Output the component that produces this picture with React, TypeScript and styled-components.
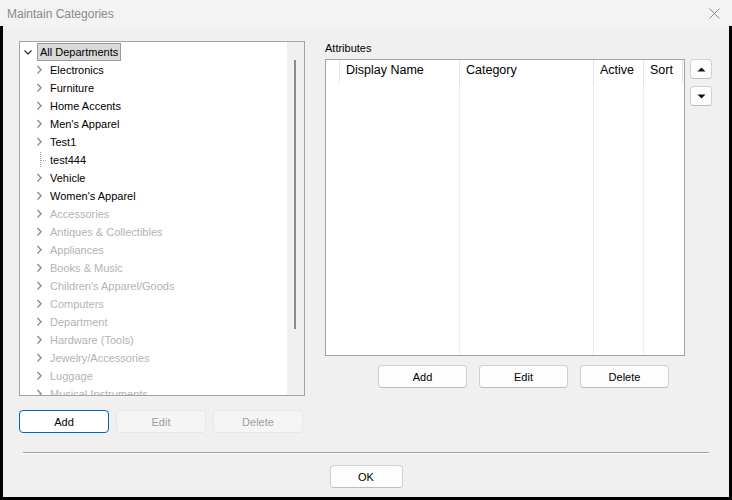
import * as React from 'react';
import styled, { createGlobalStyle } from 'styled-components';

const GlobalStyle = createGlobalStyle`
  html, body {
    margin: 0;
    padding: 0;
    background: #000;
  }
  body {
    font-family: 'Liberation Sans', Arial, sans-serif;
  }
`;

const Window = styled.div`
  width: 732px;
  height: 500px;
  display: flex;
  flex-direction: column;
  overflow: hidden;
`;

const TitleBar = styled.div`
  height: 26px;
  flex: none;
  display: flex;
  align-items: center;
  justify-content: space-between;
  padding: 0 12px 0 7px;
  box-sizing: border-box;
  background: #f3f3f3;
`;

const TitleText = styled.span`
  font-size: 12px;
  color: #8a8a8a;
  margin-top: 2px;
`;

const Body = styled.div`
  flex: 1;
  display: flex;
  flex-direction: column;
  background: #f0f0f0;
  border: 3px solid #000;
  border-top: none;
`;

const Main = styled.div`
  display: flex;
  gap: 20px;
  padding: 15px 0 0 16px;
`;

const Column = styled.div`
  display: flex;
  flex-direction: column;
`;

/* ---- tree ---- */

const TreeBox = styled.div`
  width: 286px;
  height: 355px;
  box-sizing: border-box;
  border: 1px solid #a3a3a3;
  background: #fff;
  display: flex;
  overflow: hidden;
`;

const TreeList = styled.div`
  flex: 1;
  padding-top: 1px;
  overflow: hidden;
`;

const TreeRow = styled.div<{ $level: number }>`
  height: 18px;
  flex: none;
  display: flex;
  align-items: center;
  padding-left: ${(p) => p.$level * 10}px;
`;

const Toggle = styled.svg`
  width: 16px;
  height: 18px;
  flex: none;
`;

const NodeLabel = styled.span<{ $selected?: boolean; $disabled?: boolean }>`
  margin-left: 1px;
  height: 18px;
  box-sizing: border-box;
  padding: 0 2px;
  line-height: 16px;
  font-size: 11px;
  white-space: nowrap;
  border: 1px solid ${(p) => (p.$selected ? '#9a9a9a' : 'transparent')};
  background: ${(p) => (p.$selected ? '#d9d9d9' : 'transparent')};
  color: ${(p) => (p.$disabled ? '#b3b3b3' : '#000')};
`;

const ScrollTrack = styled.div`
  width: 17px;
  flex: none;
  background: #f0f0f0;
  display: flex;
  justify-content: flex-start;
`;

const ScrollThumb = styled.div`
  width: 2px;
  height: 269px;
  margin: 18px 0 0 7px;
  background: #8b8b8b;
`;

/* ---- buttons ---- */

const ButtonRow = styled.div<{ $gap: number; $top: number; $left?: number }>`
  display: flex;
  gap: ${(p) => p.$gap}px;
  margin-top: ${(p) => p.$top}px;
  margin-left: ${(p) => p.$left ?? 0}px;
`;

const Button = styled.button<{ $variant?: 'focus' | 'disabled'; $width: number }>`
  width: ${(p) => p.$width}px;
  height: 23px;
  padding: 0;
  font-family: 'Liberation Sans', Arial, sans-serif;
  font-size: 11px;
  border-radius: 4px;
  box-sizing: border-box;
  cursor: default;
  color: ${(p) => (p.$variant === 'disabled' ? '#9d9d9d' : '#000')};
  background: ${(p) =>
    p.$variant === 'disabled' ? '#f5f5f5' : p.$variant === 'focus' ? '#fff' : '#fdfdfd'};
  border: 1px solid
    ${(p) =>
      p.$variant === 'disabled' ? '#e6e6e6' : p.$variant === 'focus' ? '#0067c0' : '#d0d0d0'};
  ${(p) => (p.$variant ? '' : 'border-bottom-color: #bdbdbd;')}
`;

const ArrowButton = styled.button`
  width: 22px;
  height: 20px;
  padding: 0;
  display: flex;
  align-items: center;
  justify-content: center;
  background: #fdfdfd;
  border: 1px solid #d0d0d0;
  border-bottom-color: #bdbdbd;
  border-radius: 4px;
  box-sizing: border-box;
`;

const ArrowStack = styled.div`
  display: flex;
  flex-direction: column;
  gap: 7px;
  margin-left: 5px;
`;

/* ---- attributes grid ---- */

const Label = styled.div`
  height: 18px;
  line-height: 14px;
  font-size: 11px;
  color: #000;
`;

const GridRow = styled.div`
  display: flex;
  align-items: flex-start;
`;

const Grid = styled.div`
  width: 360px;
  height: 297px;
  box-sizing: border-box;
  border: 1px solid #a3a3a3;
  background: #fff;
  display: flex;
`;

const GridCol = styled.div<{ $width: number }>`
  width: ${(p) => p.$width}px;
  flex: none;
  display: flex;
  flex-direction: column;
`;

const HeaderCell = styled.div`
  height: 23px;
  box-sizing: border-box;
  padding: 0 0 3px 6px;
  display: flex;
  align-items: center;
  font-size: 12.5px;
  color: #000;
  border-right: 1px solid #e5e5e5;
  white-space: nowrap;
  overflow: hidden;
`;

const BodyCell = styled.div<{ $dotted?: boolean }>`
  flex: 1;
  border-right: 1px dotted ${(p) => (p.$dotted ? '#dcdcdc' : 'transparent')};
`;

/* ---- footer ---- */

const Separator = styled.div`
  margin: 19px 20px 0;
  border-top: 1px solid #a0a0a0;
  border-bottom: 1px solid #fff;
`;

const Footer = styled.div`
  display: flex;
  justify-content: center;
  margin-top: 11px;
`;

type Node = { name: string; level: number; kind: 'open' | 'closed' | 'leaf'; disabled?: boolean; selected?: boolean };

const nodes: Node[] = [
  { name: 'All Departments', level: 0, kind: 'open', selected: true },
  { name: 'Electronics', level: 1, kind: 'closed' },
  { name: 'Furniture', level: 1, kind: 'closed' },
  { name: 'Home Accents', level: 1, kind: 'closed' },
  { name: "Men's Apparel", level: 1, kind: 'closed' },
  { name: 'Test1', level: 1, kind: 'closed' },
  { name: 'test444', level: 1, kind: 'leaf' },
  { name: 'Vehicle', level: 1, kind: 'closed' },
  { name: "Women's Apparel", level: 1, kind: 'closed' },
  { name: 'Accessories', level: 1, kind: 'closed', disabled: true },
  { name: 'Antiques & Collectibles', level: 1, kind: 'closed', disabled: true },
  { name: 'Appliances', level: 1, kind: 'closed', disabled: true },
  { name: 'Books & Music', level: 1, kind: 'closed', disabled: true },
  { name: "Children's Apparel/Goods", level: 1, kind: 'closed', disabled: true },
  { name: 'Computers', level: 1, kind: 'closed', disabled: true },
  { name: 'Department', level: 1, kind: 'closed', disabled: true },
  { name: 'Hardware (Tools)', level: 1, kind: 'closed', disabled: true },
  { name: 'Jewelry/Accessories', level: 1, kind: 'closed', disabled: true },
  { name: 'Luggage', level: 1, kind: 'closed', disabled: true },
  { name: 'Musical Instruments', level: 1, kind: 'closed', disabled: true },
];

const columns = [
  { title: '', width: 14, dotted: false },
  { title: 'Display Name', width: 120, dotted: true },
  { title: 'Category', width: 134, dotted: true },
  { title: 'Active', width: 50, dotted: true },
  { title: 'Sort', width: 39, dotted: false },
];

function TreeToggle({ kind }: { kind: Node['kind'] }) {
  return (
    <Toggle viewBox="0 0 16 18">
      {kind === 'open' && (
        <polyline points="4.5,7.5 8,11 11.5,7.5" fill="none" stroke="#3c3c3c" strokeWidth="1.3" />
      )}
      {kind === 'closed' && (
        <polyline points="7.5,5 11,8.8 7.5,12.6" fill="none" stroke="#8a8a8a" strokeWidth="1.4" />
      )}
      {kind === 'leaf' && (
        <g stroke="#a0a0a0" strokeWidth="1" strokeDasharray="1 1" fill="none">
          <line x1="10.5" y1="1" x2="10.5" y2="17" />
          <line x1="11" y1="9.5" x2="16" y2="9.5" />
        </g>
      )}
    </Toggle>
  );
}

function Arrow({ up }: { up?: boolean }) {
  return (
    <svg width="9" height="5" viewBox="0 0 9 5">
      <polygon points={up ? '0.5,4.5 4.5,0.5 8.5,4.5' : '0.5,0.5 4.5,4.5 8.5,0.5'} fill="#111" />
    </svg>
  );
}

export default function App() {
  return (
    <Window>
      <GlobalStyle />
      <TitleBar>
        <TitleText>Maintain Categories</TitleText>
        <svg width="11" height="11" viewBox="0 0 11 11">
          <path d="M0.5 0.5 L10.5 10.5 M10.5 0.5 L0.5 10.5" stroke="#8a8a8a" strokeWidth="1" />
        </svg>
      </TitleBar>
      <Body>
        <Main>
          <Column>
            <TreeBox>
              <TreeList>
                {nodes.map((n) => (
                  <TreeRow key={n.name} $level={n.level}>
                    <TreeToggle kind={n.kind} />
                    <NodeLabel $selected={n.selected} $disabled={n.disabled}>
                      {n.name}
                    </NodeLabel>
                  </TreeRow>
                ))}
              </TreeList>
              <ScrollTrack>
                <ScrollThumb />
              </ScrollTrack>
            </TreeBox>
            <ButtonRow $gap={7} $top={14}>
              <Button $width={90} $variant="focus">Add</Button>
              <Button $width={90} $variant="disabled">Edit</Button>
              <Button $width={90} $variant="disabled">Delete</Button>
            </ButtonRow>
          </Column>
          <Column>
            <Label>Attributes</Label>
            <GridRow>
              <Grid>
                {columns.map((c) => (
                  <GridCol key={c.title || 'sel'} $width={c.width}>
                    <HeaderCell>{c.title}</HeaderCell>
                    <BodyCell $dotted={c.dotted} />
                  </GridCol>
                ))}
              </Grid>
              <ArrowStack>
                <ArrowButton>
                  <Arrow up />
                </ArrowButton>
                <ArrowButton>
                  <Arrow />
                </ArrowButton>
              </ArrowStack>
            </GridRow>
            <ButtonRow $gap={12} $top={9} $left={53}>
              <Button $width={89}>Add</Button>
              <Button $width={89}>Edit</Button>
              <Button $width={89}>Delete</Button>
            </ButtonRow>
          </Column>
        </Main>
        <Separator />
        <Footer>
          <Button $width={73}>OK</Button>
        </Footer>
      </Body>
    </Window>
  );
}
